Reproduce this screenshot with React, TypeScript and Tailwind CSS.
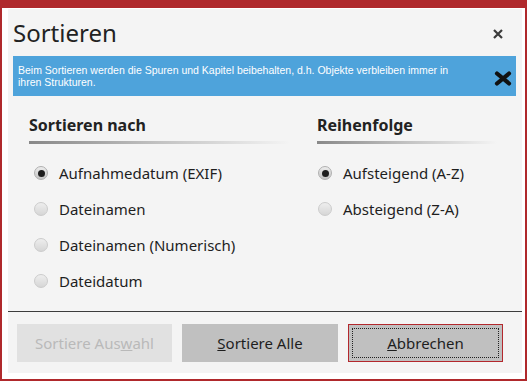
import React from "react";

const ui = { fontFamily: '"Noto Sans", "Open Sans", sans-serif' };
const small = { fontFamily: '"Liberation Sans", Arial, sans-serif' };

function Radio({ checked, label }: { checked?: boolean; label: string }) {
  return (
    <div className="flex h-[36px] items-center">
      <span
        className={
          "flex h-[14px] w-[14px] items-center justify-center rounded-full border " +
          (checked
            ? "border-[#b0b0b0] bg-gradient-to-b from-[#ececec] to-[#c4c4c4]"
            : "border-[#cccccc] bg-gradient-to-b from-[#eeeeee] to-[#d6d6d6]")
        }
      >
        {checked && <span className="h-[7px] w-[7px] rounded-full bg-[#1e1e1e]" />}
      </span>
      <span className="ml-[11px] text-[15px] text-[#1e1e1e]">{label}</span>
    </div>
  );
}

function Heading({ text, width }: { text: string; width: string }) {
  return (
    <div className={width}>
      <div className="text-[16px] font-bold leading-[21px] text-[#222]">{text}</div>
      <div className="mt-[5px] h-[3px] bg-gradient-to-r from-[#888888] via-[#c2c2c2] to-transparent" />
    </div>
  );
}

export default function App() {
  return (
    <div className="h-[381px] w-[529px] bg-white" style={ui}>
      <div className="h-[381px] w-[527px] border-x-2 border-b-2 border-t-[8px] border-[#b0292c] bg-white pb-[6px] pl-[6px] pr-[3px] pt-[1px]">
        <div className="flex h-full flex-col bg-[#f4f4f4]">
          {/* title */}
          <div className="flex h-[47px] items-center justify-between pl-[5px] pr-[19px]">
            <span className="text-[24px] leading-[32px] text-[#222]">Sortieren</span>
            <svg width="10" height="10" viewBox="0 0 10 10" className="mt-[2px]">
              <path d="M1 1 L9 9 M9 1 L1 9" stroke="#3a3a3a" strokeWidth="2.2" />
            </svg>
          </div>

          {/* info banner */}
          <div
            className="ml-[5px] mr-[6px] flex h-[40px] items-center justify-between bg-[#4ea3db] pl-[5px] pr-[4px]"
            style={small}
          >
            <p className="w-[450px] text-[10.5px] leading-[12px] text-white">
              Beim Sortieren werden die Spuren und Kapitel beibehalten, d.h. Objekte verbleiben immer in ihren Strukturen.
            </p>
            <svg width="18" height="15" viewBox="0 0 18 15" className="mt-[4px]">
              <path d="M3 2.5 L15 12.5 M15 2.5 L3 12.5" stroke="#111" strokeWidth="4.2" strokeLinecap="round" />
            </svg>
          </div>

          {/* options */}
          <div className="mt-[19px] flex pl-[21px]">
            <div className="w-[288px]">
              <Heading text="Sortieren nach" width="w-[261px]" />
              <div className="mt-[11px] pl-[5px]">
                <Radio checked label="Aufnahmedatum (EXIF)" />
                <Radio label="Dateinamen" />
                <Radio label="Dateinamen (Numerisch)" />
                <Radio label="Dateidatum" />
              </div>
            </div>
            <div>
              <Heading text="Reihenfolge" width="w-[180px]" />
              <div className="mt-[11px] pl-[1px]">
                <Radio checked label="Aufsteigend (A-Z)" />
                <Radio label="Absteigend (Z-A)" />
              </div>
            </div>
          </div>

          {/* footer */}
          <div className="mt-auto border-t border-[#3c3c3c] pb-[11px] pl-[9px] pt-[12px]">
            <div className="flex gap-[10px] text-[15px]">
              <button className="h-[38px] w-[155px] bg-[#e1e1e1] text-[#b9b9b9]">
                Sortiere Aus<span className="underline">w</span>ahl
              </button>
              <button className="h-[38px] w-[156px] bg-[#c0c0c0] text-[#1e1e1e]">
                <span className="underline">S</span>ortiere Alle
              </button>
              <button className="relative h-[38px] w-[155px] border border-[#b3282d] bg-[#c0c0c0] text-[#1e1e1e]">
                <span className="absolute inset-[3px] border border-dotted border-[#222]" />
                <span className="relative">
                  <span className="underline">A</span>bbrechen
                </span>
              </button>
            </div>
          </div>
        </div>
      </div>
    </div>
  );
}
